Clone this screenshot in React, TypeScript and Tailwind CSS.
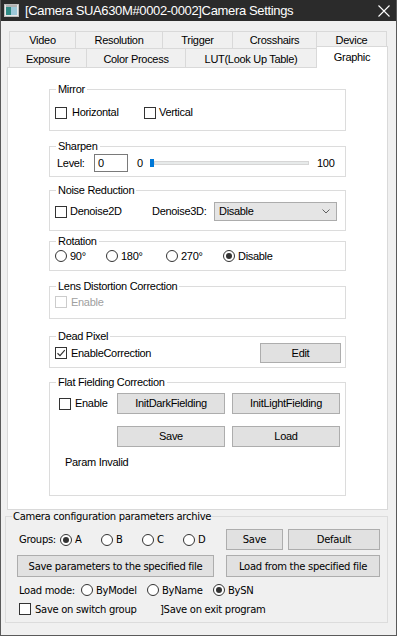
import React from "react";

function Check({ checked = false, disabled = false, label, gap = "ml-[5px]" }: { checked?: boolean; disabled?: boolean; label: string; gap?: string }) {
  return (
    <div className="flex items-center">
      <span
        className={`w-[12px] h-[12px] border bg-white flex items-center justify-center shrink-0 ${disabled ? "border-[#cccccc]" : "border-[#333333]"}`}
      >
        {checked && (
          <svg width="10" height="10" viewBox="0 0 10 10">
            <path d="M1.5 5.2 L4 7.6 L8.8 2.2" fill="none" stroke="#333" strokeWidth="1.2" />
          </svg>
        )}
      </span>
      <span className={`${gap} whitespace-nowrap ${disabled ? "text-[#a0a0a0]" : "text-black"}`}>{label}</span>
    </div>
  );
}

function Radio({ checked = false, label, gap = "ml-[4px]" }: { checked?: boolean; label: string; gap?: string }) {
  return (
    <div className="flex items-center">
      <span className="w-[12px] h-[12px] rounded-full border border-[#333333] bg-white flex items-center justify-center shrink-0">
        {checked && <span className="w-[6px] h-[6px] rounded-full bg-[#333333]" />}
      </span>
      <span className={`${gap} whitespace-nowrap`}>{label}</span>
    </div>
  );
}

function Btn({ label, className = "" }: { label: string; className?: string }) {
  return (
    <div className={`bg-[#e1e1e1] border border-[#adadad] flex items-center justify-center whitespace-nowrap ${className}`}>{label}</div>
  );
}

function Group({ label, className = "", children }: { label: string; className?: string; children?: React.ReactNode }) {
  return (
    <fieldset className={`border border-[#dcdcdc] w-[297px] ml-[41px] ${className}`}>
      <legend className="ml-[6px] px-[2px] leading-[13px]">{label}</legend>
      {children}
    </fieldset>
  );
}

export default function App() {
  const row1 = [
    { t: "Video", w: "w-[67px]" },
    { t: "Resolution", w: "w-[87px]" },
    { t: "Trigger", w: "w-[70px]" },
    { t: "Crosshairs", w: "w-[84px]" },
    { t: "Device", w: "w-[70px]" },
  ];
  const row2 = [
    { t: "Exposure", w: "w-[78px]" },
    { t: "Color Process", w: "w-[99px]" },
    { t: "LUT(Look Up Table)", w: "w-[131px]" },
  ];
  return (
    <div className="w-[397px] h-[636px] bg-[#f0f0f0] border-x border-b border-[#5a5a5a] flex flex-col font-['Liberation_Sans',Arial,sans-serif] text-[11px] tracking-[-0.3px] text-black overflow-hidden">
      {/* Title bar */}
      <div className="h-[21px] bg-[#2b2b2b] -mx-[1px] flex items-center shrink-0">
        <svg className="ml-[4px] shrink-0" width="15" height="13" viewBox="0 0 15 13">
          <rect x="0.5" y="0.5" width="14" height="12" fill="#e8e8e8" stroke="#bdbdbd" />
          <rect x="2" y="3" width="5" height="8" fill="#2f8a84" />
          <rect x="7" y="3" width="6" height="8" fill="#9cc7d8" />
          <rect x="2" y="1.5" width="11" height="1" fill="#7a7a7a" />
        </svg>
        <span className="ml-[6px] text-white text-[13px] tracking-[-0.35px] whitespace-nowrap">[Camera SUA630M#0002-0002]Camera Settings</span>
        <svg className="ml-auto mr-[7px]" width="12" height="12" viewBox="0 0 12 12">
          <path d="M0.5 0.5 L11.5 11.5 M11.5 0.5 L0.5 11.5" stroke="#ffffff" strokeWidth="1.1" />
        </svg>
      </div>

      {/* Tabs */}
      <div className="mt-[10px] ml-[8px] flex flex-col">
        <div className="flex h-[17px]">
          {row1.map((r, i) => (
            <div
              key={r.t}
              className={`${r.w} h-full border-t border-r border-[#d9d9d9] ${i === 0 ? "border-l" : ""} flex items-center justify-center pt-[1px]`}
            >
              {r.t}
            </div>
          ))}
        </div>
        <div className="flex h-[19px] items-start">
          {row2.map((r, i) => (
            <div
              key={r.t}
              className={`${r.w} h-full border-t border-r border-[#d9d9d9] ${i === 0 ? "border-l" : ""} flex items-center justify-center pt-[2px]`}
            >
              {r.t}
            </div>
          ))}
          <div className="w-[72px] h-[22px] -mt-[2px] -ml-[1px] relative z-10 bg-white border-x border-t border-[#d9d9d9] flex items-center justify-center pb-[1px]">
            Graphic
          </div>
        </div>
      </div>

      {/* Panel */}
      <div className="ml-[6px] w-[381px] h-[443px] bg-white border border-[#d9d9d9] shrink-0 flex flex-col">
        <Group label="Mirror" className="mt-[15px] h-[48px]">
          <div className="flex items-center pl-[5px] pt-[10px] h-[23px]">
            <div className="w-[89px]">
              <Check label="Horizontal" />
            </div>
            <Check label="Vertical" gap="ml-[3px]" />
          </div>
        </Group>

        <Group label="Sharpen" className="mt-[9px] h-[37px]">
          <div className="flex items-center pl-[7px] mt-[1px] h-[18px]">
            <span className="w-[37px]">Level:</span>
            <div className="w-[34px] h-[18px] border border-[#7a7a7a] bg-white flex items-center pl-[3px]">0</div>
            <span className="ml-[9px] w-[13px]">0</span>
            <div className="w-[159px] flex items-center">
              <span className="w-[4px] h-[8px] bg-[#0078d7] shrink-0" />
              <span className="flex-1 h-[4px] bg-[#e7eaea] border border-[#d6d6d6]" />
            </div>
            <span className="ml-[8px]">100</span>
          </div>
        </Group>

        <Group label="Noise Reduction" className="mt-[7px] h-[47px]">
          <div className="flex items-center pl-[5px] mt-[5px] h-[19px]">
            <div className="w-[97px]">
              <Check label="Denoise2D" gap="ml-[3px]" />
            </div>
            <span className="w-[62px]">Denoise3D:</span>
            <div className="w-[123px] h-[19px] bg-[#e5e5e5] border border-[#acacac] flex items-center pl-[4px] pr-[6px]">
              <span>Disable</span>
              <svg className="ml-auto" width="8" height="5" viewBox="0 0 8 5">
                <path d="M0.5 0.5 L4 4 L7.5 0.5" fill="none" stroke="#606060" strokeWidth="1" />
              </svg>
            </div>
          </div>
        </Group>

        <Group label="Rotation" className="mt-[4px] h-[36px]">
          <div className="flex items-center pl-[5px] mt-[1px] h-[14px]">
            <div className="w-[51px]">
              <Radio label="90°" gap="ml-[3px]" />
            </div>
            <div className="w-[60px]">
              <Radio label="180°" gap="ml-[3px]" />
            </div>
            <div className="w-[57px]">
              <Radio label="270°" gap="ml-[3px]" />
            </div>
            <Radio label="Disable" checked gap="ml-[3px]" />
          </div>
        </Group>

        <Group label="Lens Distortion Correction" className="mt-[9px] h-[39px]">
          <div className="flex items-center pl-[5px] mt-[2px] h-[14px]">
            <Check label="Enable" disabled gap="ml-[4px]" />
          </div>
        </Group>

        <Group label="Dead Pixel" className="mt-[11px] h-[38px]">
          <div className="flex items-center justify-between pl-[5px] pr-[4px] h-[20px]">
            <Check label="EnableCorrection" checked gap="ml-[4px]" />
            <Btn label="Edit" className="w-[81px] h-[20px]" />
          </div>
        </Group>

        <Group label="Flat Fielding Correction" className="mt-[8px] h-[120px]">
          <div className="flex items-center pl-[9px] mt-[4px] h-[21px]">
            <div className="w-[58px]">
              <Check label="Enable" gap="ml-[4px]" />
            </div>
            <Btn label="InitDarkFielding" className="w-[108px] h-[21px]" />
            <Btn label="InitLightFielding" className="ml-[7px] w-[108px] h-[21px]" />
          </div>
          <div className="flex items-center pl-[67px] mt-[12px] h-[21px]">
            <Btn label="Save" className="w-[108px] h-[21px]" />
            <Btn label="Load" className="ml-[7px] w-[108px] h-[21px]" />
          </div>
          <div className="pl-[15px] mt-[9px] leading-[13px]">Param Invalid</div>
        </Group>
      </div>

      {/* Archive group */}
      <fieldset className="ml-[4px] w-[383px] h-[113px] border border-[#dcdcdc] font-['DejaVu_Sans',sans-serif] text-[10px] tracking-[-0.3px]">
        <legend className="ml-[6px] px-[1px] leading-[13px]">Camera configuration parameters archive</legend>
        <div className="flex items-center pl-[13px] mt-[6px] h-[21px]">
          <span className="w-[41px]">Groups:</span>
          <div className="w-[41px]">
            <Radio label="A" checked gap="ml-[3px]" />
          </div>
          <div className="w-[41px]">
            <Radio label="B" gap="ml-[3px]" />
          </div>
          <div className="w-[41px]">
            <Radio label="C" gap="ml-[3px]" />
          </div>
          <div className="w-[43px]">
            <Radio label="D" gap="ml-[3px]" />
          </div>
          <Btn label="Save" className="w-[57px] h-[21px]" />
          <Btn label="Default" className="ml-[5px] w-[92px] h-[21px]" />
        </div>
        <div className="flex items-center pl-[11px] mt-[5px] h-[22px]">
          <Btn label="Save parameters to the specified file" className="w-[197px] h-[22px]" />
          <Btn label="Load from the specified file" className="ml-[12px] w-[154px] h-[22px]" />
        </div>
        <div className="flex items-center pl-[13px] mt-[6px] h-[14px]">
          <span className="w-[62px]">Load mode:</span>
          <div className="w-[66px]">
            <Radio label="ByModel" gap="ml-[3px]" />
          </div>
          <div className="w-[66px]">
            <Radio label="ByName" gap="ml-[3px]" />
          </div>
          <Radio label="BySN" checked gap="ml-[3px]" />
        </div>
        <div className="flex items-center pl-[13px] mt-[5px] h-[14px]">
          <div className="w-[141px]">
            <Check label="Save on switch group" gap="ml-[4px]" />
          </div>
          <span>]Save on exit program</span>
        </div>
      </fieldset>
    </div>
  );
}
